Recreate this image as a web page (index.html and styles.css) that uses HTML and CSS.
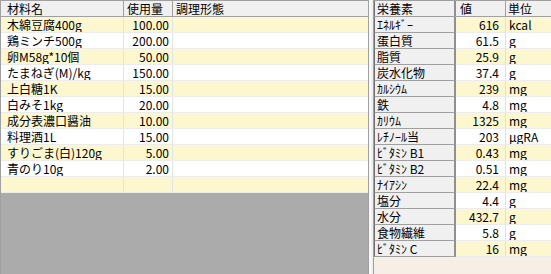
FILE: index.html
```html
<!DOCTYPE html>
<html lang="ja">
<head>
<meta charset="utf-8">
<title>材料</title>
<link rel="stylesheet" href="styles.css">
</head>
<body>
<div class="app">
  <div class="left">
    <div class="row head"><div class="c c1">材料名</div><div class="c c2">使用量</div><div class="c c3">調理形態</div></div>
    <div class="row y"><div class="c c1">木綿豆腐400g</div><div class="c c2 num">100.00</div><div class="c c3"></div></div>
    <div class="row"><div class="c c1">鶏ミンチ500g</div><div class="c c2 num">200.00</div><div class="c c3"></div></div>
    <div class="row y"><div class="c c1">卵M58g*10個</div><div class="c c2 num">50.00</div><div class="c c3"></div></div>
    <div class="row"><div class="c c1">たまねぎ(M)/kg</div><div class="c c2 num">150.00</div><div class="c c3"></div></div>
    <div class="row y"><div class="c c1">上白糖1K</div><div class="c c2 num">15.00</div><div class="c c3"></div></div>
    <div class="row"><div class="c c1">白みそ1kg</div><div class="c c2 num">20.00</div><div class="c c3"></div></div>
    <div class="row y"><div class="c c1">成分表濃口醤油</div><div class="c c2 num">10.00</div><div class="c c3"></div></div>
    <div class="row"><div class="c c1">料理酒1L</div><div class="c c2 num">15.00</div><div class="c c3"></div></div>
    <div class="row y"><div class="c c1">すりごま(白)120g</div><div class="c c2 num">5.00</div><div class="c c3"></div></div>
    <div class="row"><div class="c c1">青のり10g</div><div class="c c2 num">2.00</div><div class="c c3"></div></div>
    <div class="row y"><div class="c c1"></div><div class="c c2 num"></div><div class="c c3"></div></div>
  </div>
  <div class="split"></div>
  <div class="right">
    <div class="nrow nhead"><div class="n n1">栄養素</div><div class="n n2">値</div><div class="n n3">単位</div></div>
    <div class="nrow y"><div class="n n1">ｴﾈﾙｷﾞｰ</div><div class="n n2">616</div><div class="n n3">kcal</div></div>
    <div class="nrow"><div class="n n1">蛋白質</div><div class="n n2">61.5</div><div class="n n3">g</div></div>
    <div class="nrow y"><div class="n n1">脂質</div><div class="n n2">25.9</div><div class="n n3">g</div></div>
    <div class="nrow"><div class="n n1">炭水化物</div><div class="n n2">37.4</div><div class="n n3">g</div></div>
    <div class="nrow y"><div class="n n1">ｶﾙｼｳﾑ</div><div class="n n2">239</div><div class="n n3">mg</div></div>
    <div class="nrow"><div class="n n1">鉄</div><div class="n n2">4.8</div><div class="n n3">mg</div></div>
    <div class="nrow y"><div class="n n1">ｶﾘｳﾑ</div><div class="n n2">1325</div><div class="n n3">mg</div></div>
    <div class="nrow"><div class="n n1">ﾚﾁﾉｰﾙ当</div><div class="n n2">203</div><div class="n n3">μgRA</div></div>
    <div class="nrow y"><div class="n n1">ﾋﾞﾀﾐﾝ B1</div><div class="n n2">0.43</div><div class="n n3">mg</div></div>
    <div class="nrow"><div class="n n1">ﾋﾞﾀﾐﾝ B2</div><div class="n n2">0.51</div><div class="n n3">mg</div></div>
    <div class="nrow y"><div class="n n1">ﾅｲｱｼﾝ</div><div class="n n2">22.4</div><div class="n n3">mg</div></div>
    <div class="nrow"><div class="n n1">塩分</div><div class="n n2">4.4</div><div class="n n3">g</div></div>
    <div class="nrow y"><div class="n n1">水分</div><div class="n n2">432.7</div><div class="n n3">g</div></div>
    <div class="nrow"><div class="n n1">食物繊維</div><div class="n n2">5.8</div><div class="n n3">g</div></div>
    <div class="nrow y"><div class="n n1">ﾋﾞﾀﾐﾝ C</div><div class="n n2">16</div><div class="n n3">mg</div></div>
  </div>
</div>
</body>
</html>
```
FILE: styles.css
```css
* { box-sizing: border-box; }
html, body { margin: 0; padding: 0; }
body {
  width: 551px;
  height: 274px;
  overflow: hidden;
  font-family: "Noto Sans CJK JP", "DejaVu Sans", sans-serif;
  font-size: 12px;
  color: #000;
  background: #f7efe6;
}
.app {
  display: flex;
  width: 551px;
  height: 274px;
}
.left {
  width: 369px;
  height: 274px;
  background: #ababab;
  border-top: 1px solid #a0a0a0;
  border-left: 1px solid #a0a0a0;
  border-right: 1px solid #a0a0a0;
  display: flex;
  flex-direction: column;
}
.row {
  display: flex;
  height: 16px;
  background: #fff;
  border-bottom: 1px solid #ececec;
}
.row.y { background: #fdf7d0; }
.row.head {
  background: #f0f0f0;
  border-bottom: 1px solid #a0a0a0;
}
.c {
  line-height: 15px;
  white-space: nowrap;
  overflow: hidden;
  border-right: 1px solid #e4e4e4;
}
.head .c { border-right-color: #a0a0a0; }
.c1 { width: 123px; padding-left: 6px; }
.c2 { width: 49px; padding-left: 3px; }
.c3 { flex: 1; padding-left: 3px; border-right: none; }
.num { text-align: right; padding-right: 3px; padding-left: 0; }
.head .c2 { text-align: left; padding-left: 3px; }
.split {
  width: 5px;
  height: 274px;
  background: #f0f0f0;
  border-left: 2px solid #fafafa;
  border-right: 1px solid #a0a0a0;
}
.right {
  flex: 1;
  height: 274px;
  display: flex;
  flex-direction: column;
  background: #f7efe6;
}
.nrow {
  display: flex;
  height: 16px;
  background: #fff;
  border-bottom: 1px solid #ececec;
}
.nrow.y { background: #fdf7d0; }
.nrow.nhead {
  height: 17px;
  background: #f0f0f0;
  border-top: 1px solid #a0a0a0;
  border-bottom: 1px solid #a0a0a0;
}
.n {
  line-height: 15px;
  white-space: nowrap;
  overflow: hidden;
}
.n1 {
  width: 82px;
  padding-left: 2px;
  background: #f0f0f0;
  border-left: 1px solid #6e6e6e;
  border-right: 2px solid #909090;
  margin-bottom: -1px;
  border-bottom: 1px solid #a0a0a0;
  line-height: 15px;
}
.nhead .n1 { margin-bottom: 0; border-bottom: none; }
.n2 {
  width: 50px;
  text-align: right;
  padding-right: 6px;
  border-right: 1px solid #e0e0e0;
}
.nhead .n2 { text-align: left; padding-left: 4px; padding-right: 0; border-right-color: #a0a0a0; }
.n3 { flex: 1; padding-left: 3px; }
.nhead .n3 { padding-left: 2px; }
```
